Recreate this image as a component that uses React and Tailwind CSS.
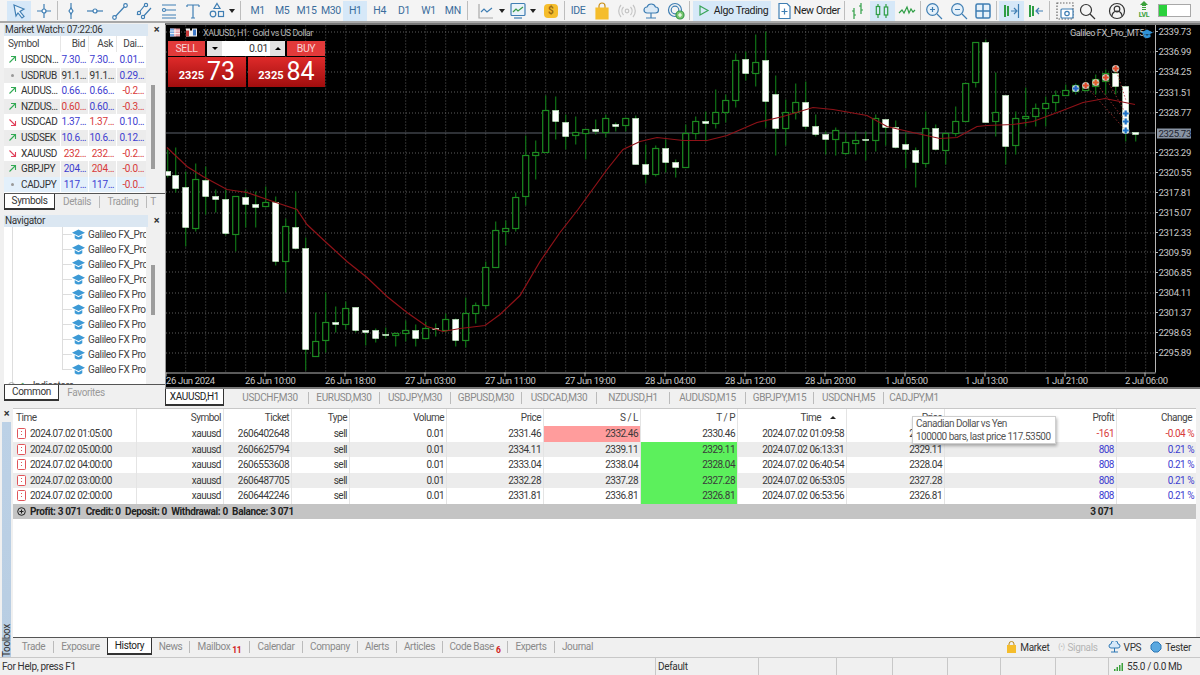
import React from "react";

const candles = [
[167.7,150,178,172,176,'w'],[175.7,148,193,176,189,'w'],[185.7,172,247,188,228,'w'],[195.7,164,232,180,229,'g'],[205.7,167,215,181,197,'w'],[215.7,190,213,197,200,'w'],[225.7,190,236,200,234,'w'],[235.7,197,252,197,235,'g'],[245.7,190,228,198,205,'w'],[255.7,192,228,205,208,'w'],[265.7,187,208,203,207,'g'],[275.7,197,266,203,262,'w'],[285.7,219,293,227,262,'g'],[295.7,192,250,228,249,'w'],[305.7,238,371,249,350,'w'],[315.7,313,357,342,357,'g'],[325.7,293,353,323,341,'g'],[335.7,307,333,323,325,'w'],[345.7,302,330,309,325,'g'],[355.7,308,333,308,331,'w'],[365.7,331,346,331,333,'w'],[375.7,329,343,331,339,'w'],[385.7,328,339,335,336,'w'],[395.7,333,347,334,336,'g'],[405.7,321,342,331,334,'g'],[415.7,325,347,331,339,'w'],[425.7,322,340,329,339,'g'],[435.7,324,337,329,330,'w'],[445.7,314,333,320,331,'g'],[455.7,319,347,320,341,'w'],[465.7,298,348,314,341,'g'],[475.7,303,324,306,314,'g'],[485.7,262,310,268,306,'g'],[495.7,222,268,231,268,'g'],[505.7,221,246,229,232,'g'],[515.7,193,232,198,229,'g'],[525.7,136,206,156,197,'g'],[535.7,141,180,153,156,'g'],[545.7,96,153,111,153,'g'],[555.7,97,140,111,122,'w'],[565.7,115,150,123,137,'w'],[575.7,117,145,133,136,'g'],[585.7,130,160,130,134,'g'],[595.7,120,135,130,132,'w'],[605.7,115,138,119,133,'g'],[615.7,123,132,125,127,'w'],[625.7,118,132,119,126,'g'],[635.7,116,165,119,165,'w'],[645.7,145,184,165,175,'w'],[655.7,146,177,149,175,'g'],[665.7,140,173,149,163,'w'],[675.7,160,178,163,168,'w'],[685.7,125,168,134,168,'g'],[695.7,117,140,122,134,'g'],[705.7,112,142,122,124,'w'],[715.7,90,129,113,124,'g'],[725.7,95,123,101,113,'g'],[735.7,54,108,61,101,'g'],[745.7,52,81,60,74,'w'],[755.7,35,87,63,74,'g'],[765.7,32,128,61,102,'w'],[775.7,76,156,95,129,'w'],[785.7,100,146,113,129,'g'],[795.7,84,120,103,113,'g'],[805.7,82,130,103,127,'w'],[815.7,115,137,127,135,'w'],[825.7,132,155,135,140,'w'],[835.7,128,156,131,140,'g'],[845.7,133,155,143,154,'g'],[855.7,132,155,141,144,'g'],[865.7,132,161,140,141,'w'],[875.7,115,152,119,141,'g'],[885.7,120,146,120,128,'w'],[895.7,121,149,128,148,'w'],[905.7,133,169,145,150,'w'],[915.7,148,188,151,163,'w'],[925.7,112,168,129,164,'g'],[935.7,125,151,129,150,'w'],[945.7,133,165,134,151,'g'],[955.7,107,137,122,134,'g'],[965.7,84,122,84,122,'g'],[975.7,43,88,43,83,'g'],[985.7,40,123,43,123,'w'],[995.7,73,137,113,122,'g'],[1005.7,96,165,96,147,'w'],[1015.7,112,155,119,146,'g'],[1025.7,88,127,117,119,'g'],[1035.7,104,127,109,117,'g'],[1045.7,97,127,104,109,'g'],[1055.7,91,112,96,103,'g'],[1065.7,85,96,91,96,'g'],[1075.7,84,95,86,92,'g'],[1085.7,82,92,86,91,'g'],[1095.7,75,95,80,87,'g'],[1105.7,70,95,74,82,'g'],[1115.7,67,95,74,87,'w'],[1125.7,87,142,87,133,'w'],[1135.7,133,142,133,135,'w']
];
const ma = "167,148 187,167 203,177 227,190 247,193 273,202 297,210 307,225 323,240 347,262 367,278 387,297 407,313 427,327 443,332 460,329 485,326 500,315 520,296 540,262 560,233 578,210 607,170 623,150 640,142 657,138 683,141 707,141 727,136 757,123 783,117 813,108 833,110 867,116 887,127 917,134 940,139 957,138 977,127 987,126 1013,125 1033,122 1060,112 1083,103 1105,99 1120,102 1135,105";
const prices = [[32,"2339.73"],[52,"2336.99"],[72,"2334.25"],[93,"2331.51"],[113,"2328.77"],[153,"2323.29"],[173,"2320.55"],[193,"2317.81"],[213,"2315.07"],[233,"2312.33"],[253,"2309.59"],[273,"2306.85"],[293,"2304.11"],[313,"2301.37"],[333,"2298.63"],[353,"2295.89"]];
const gridY = [32,52,72,92,113,153,173,192,213,233,252,272,293,313,333,353];
const gridX = Array.from({length:49},(_,i)=>185.7+i*20);
const times = [[166,"26 Jun 2024"],[245,"26 Jun 10:00"],[325,"26 Jun 18:00"],[405,"27 Jun 03:00"],[485,"27 Jun 11:00"],[565,"27 Jun 19:00"],[645,"28 Jun 04:00"],[725,"28 Jun 12:00"],[805,"28 Jun 20:00"],[885,"1 Jul 05:00"],[965,"1 Jul 13:00"],[1045,"1 Jul 21:00"],[1125,"2 Jul 06:00"]];

function Marker({x,y,c}){return <g><circle cx={x} cy={y} r="3.6" fill="#e8f0e8" opacity=".85"/><path d={`M${x-3} ${y}H${x+3}M${x} ${y-3}V${y+3}`} stroke={c} strokeWidth="2.2"/></g>;}

function Chart(){
 return <svg viewBox="165 24 1035 364" className="block w-full h-full">
  <rect x="165" y="24" width="1035" height="364" fill="#000"/>
  <g stroke="#666" strokeDasharray="1 2" strokeWidth=".9">
   {gridY.map(y=><line key={y} x1="166" x2="1155" y1={y+.5} y2={y+.5}/>)}
   {gridX.map(x=><line key={x} x1={x} x2={x} y1="26" y2="373"/>)}
  </g>
  <line x1="166" x2="1155" y1="133.5" y2="133.5" stroke="#737c88" strokeWidth=".8"/>
  <g strokeWidth="1.2">
  {candles.map(([x,h,l,t,b,k])=><g key={x}>
    <line x1={x} x2={x} y1={h} y2={l} stroke="#0f7316"/>
    {k==='g'?<rect x={x-3} y={t} width="6" height={b-t} fill="#000" stroke="#1c8a20"/>:<rect x={x-3} y={t} width="6" height={Math.max(b-t,1)} fill="#fff" stroke="#c9f5c9" strokeWidth=".6"/>}
  </g>)}
  </g>
  <polyline points={ma} fill="none" stroke="#8f1218" strokeWidth="1.2"/>
  <g stroke="#a33" strokeDasharray="1.5 2" strokeWidth=".8" fill="none">
   <path d="M1085.7 86L1125.7 131M1095.7 83L1125.7 122M1105.7 78L1125.7 114M1115.7 69L1125.7 100"/>
  </g>
  <Marker x={1075.7} y={89} c="#2266cc"/>
  <Marker x={1085.7} y={86} c="#e0492a"/>
  <Marker x={1095.7} y={83} c="#e0602a"/>
  <Marker x={1105.7} y={78} c="#e0492a"/>
  <Marker x={1115.7} y={69} c="#e0492a"/>
  <Marker x={1125.7} y={114} c="#1f74c8"/>
  <Marker x={1125.7} y={122} c="#1f74c8"/>
  <Marker x={1125.7} y={131} c="#1f74c8"/>
  <line x1="1155.5" x2="1155.5" y1="25" y2="373" stroke="#b5b5b5"/>
  <line x1="166" x2="1155.5" y1="373.5" y2="373.5" stroke="#b5b5b5"/>
  <line x1="165.5" x2="165.5" y1="25" y2="388" stroke="#9a9a9a"/>
  <line x1="166" x2="1200" y1="25" y2="25" stroke="#777"/>
  {prices.map(([y,t])=><g key={t}><line x1="1155" x2="1158" y1={y} y2={y} stroke="#bbb"/><text x="1158.500" y={y+3.5} fontSize="9.600" fill="#c9c9c9">{t}</text></g>)}
  <rect x="1157" y="129" width="34" height="10" fill="#8893a3"/>
  <text x="1158.500" y="137.500" fontSize="9.600" fill="#1d2430">2325.73</text>
  {times.map(([x,t],i)=><g key={t}><line x1={x+20-(i?0:20)} x2={x+20-(i?0:20)} y1="373" y2="377" stroke="#bbb"/><text x={x} y="384" fontSize="9.500" fill="#c9c9c9">{t}</text></g>)}
  <rect x="170" y="29" width="10" height="8" fill="#e9a0a8"/><rect x="170" y="29" width="4" height="8" fill="#7aa7df"/><path d="M170 31.500H180M170 34H180M175 29V37" stroke="#fff" strokeWidth=".8"/>
  <path d="M186 29h4v2h2v-2h5v8h-11z" fill="#eee"/><rect x="186" y="31" width="3" height="6" fill="#c83a3a"/><rect x="193" y="30" width="3" height="6" fill="#3c78c8"/>
  <text x="203" y="36" fontSize="9" letterSpacing="-0.5" fill="#b5b5b5" xmlSpace="preserve">XAUUSD, H1:  Gold vs US Dollar</text>
  <text x="1070" y="36" fontSize="9.200" letterSpacing="-0.45" fill="#c4c4c4">Galileo FX_Pro_MT5</text>
  <path d="M1141 33l6-3 6 3-6 3zM1143.500 35v2.500c2 1.500 5 1.500 7 0V35" fill="#2f93d8"/>
 </svg>;
}

function TradePanel(){
 return <div className="absolute left-[3px] top-[18px] w-[157px] h-[46px] flex flex-col gap-px text-white">
  <div className="flex h-[15px] items-stretch">
   <div className="w-[37px] bg-[#e23a3a] text-[10.500px] leading-[15px] text-center text-[#f6d5d5]">SELL</div>
   <div className="w-[82px] flex bg-white border-x-2 border-black text-[10.500px] text-[#333]">
     <div className="w-[15px] bg-[#e2e2e2] flex items-center justify-center"><div className="border-x-[3px] border-x-transparent border-t-[3px] border-t-black"/></div>
     <div className="flex-1 text-right leading-[15px] pr-[2px]">0.01</div>
     <div className="w-[15px] bg-[#e2e2e2] flex items-center justify-center"><div className="border-x-[3px] border-x-transparent border-b-[3px] border-b-black"/></div>
   </div>
   <div className="w-[38px] bg-[#e23a3a] text-[10.500px] leading-[15px] text-center text-[#f6d5d5]">BUY</div>
  </div>
  <div className="flex gap-[2px] h-[30px]">
   <div className="w-[78px] bg-gradient-to-b from-[#df2a2a] to-[#a00d0d] flex items-end justify-center gap-[3px] pb-[1px]"><span className="text-[11px] font-bold mb-[2px] tracking-normal">2325</span><span className="text-[25px] leading-[28px] tracking-normal">73</span></div>
   <div className="w-[77px] bg-gradient-to-b from-[#df2a2a] to-[#a00d0d] flex items-end justify-center gap-[3px] pb-[1px]"><span className="text-[11px] font-bold mb-[2px] tracking-normal">2325</span><span className="text-[25px] leading-[28px] tracking-normal">84</span></div>
  </div>
 </div>;
}

const S = ({w=18,h=18,children,cn=""})=><svg width={w} height={h} viewBox="0 0 18 18" fill="none" stroke="#3f7eb3" strokeWidth="1.2" className={cn}>{children}</svg>;
const Caret = ()=><div className="border-x-[3px] border-x-transparent border-t-[4px] border-t-[#222]"/>;
const Sep = ()=><div className="w-px h-[19px] bg-[#bdbdbd] mx-[1px] shrink-0"/>;

function Tool({w="w-[24.400px]",hl,children}){
 return <div className={`${w} h-[20px] shrink-0 flex items-center justify-center ${hl?"bg-[#d6e8f8]":""}`}>{children}</div>;
}
const Tf = ({t,hl})=><Tool hl={hl}><span className="text-[10.500px] text-[#3b6d9c]">{t}</span></Tool>;

function Toolbar(){
 return <div className="h-[23px] flex items-center pl-[7px] bg-[#f4f4f4] border-b-2 border-b-[#a8a8a8] shrink-0">
  <Tool hl><S><path d="M4 3l10 4-4 2.500 4 5-2 1.500-4-5-2 3z" fill="#e9f3fb"/></S></Tool>
  <Tool><S><path d="M9 2v14M2 9h14"/><circle cx="9" cy="9" r="2" fill="#fff"/></S></Tool>
  <Sep/>
  <Tool><S><path d="M9 1v16"/><path d="M9 6l2 3-2 3-2-3z" fill="#fff"/></S></Tool>
  <Tool><S><path d="M1 9h16"/><circle cx="9" cy="9" r="2" fill="#fff"/></S></Tool>
  <Tool><S><path d="M3 16L15 3"/><circle cx="3.500" cy="15.500" r="1.800" fill="#fff"/><circle cx="14.500" cy="3.500" r="1.800" fill="#fff"/></S></Tool>
  <Tool><S><path d="M2 13L10 3M7 16l9-10"/><circle cx="4" cy="11" r="1.600" fill="#fff"/><circle cx="11" cy="3" r="1.600" fill="#fff"/><circle cx="8" cy="15" r="1.600" fill="#fff"/></S></Tool>
  <Tool><S><path d="M2 3h14M6 8h10M2 13h14M2 16h14"/><circle cx="4" cy="8" r="1.500" fill="#fff"/></S></Tool>
  <Tool><S><path d="M3 3h12M9 3v13M7 16h4M3 3v2M15 3v2"/></S></Tool>
  <Tool><S><path d="M9 1.500l3 5H6z"/><circle cx="5" cy="12" r="2.800"/><rect x="10.500" y="9.500" width="5" height="5"/></S></Tool>
  <div className="w-[5px] flex justify-center"><Caret/></div>
  <div className="w-[4px] shrink-0"/><Sep/><div className="w-[4px] shrink-0"/>
  {["M1","M5","M15","M30"].map(t=><Tf key={t} t={t}/>)}<Tf t="H1" hl/>{["H4","D1","W1","MN"].map(t=><Tf key={t} t={t}/>)}
  <div className="w-[1px] shrink-0"/><Sep/><div className="w-[5px] shrink-0"/>
  <Tool><S><path d="M2 2v14h14" stroke="#aaa"/><path d="M4 10l3-3 3 3 5-4"/></S></Tool>
  <div className="w-[7px] shrink-0 flex justify-center"><Caret/></div>
  <Tool><S><rect x="2" y="1.500" width="14" height="12" rx="1" fill="#eaf3fa"/><path d="M4 10l3-3 2 2 5-4" stroke="#3a9a4a"/><path d="M5 16h8"/></S></Tool>
  <div className="w-[7px] shrink-0 flex justify-center"><Caret/></div>
  <div className="w-[7px] shrink-0"/>
  <Tool w="w-[14px]"><div className="w-[14px] h-[14px] bg-[#f5bd2c] rounded-sm text-[10px] leading-[14px] text-center text-[#9a6a10] font-bold">$</div></Tool>
  <div className="w-[5px] shrink-0"/><Sep/>
  <Tool><span className="text-[10.500px] text-[#3b6d9c]">IDE</span></Tool>
  <Tool><S><path d="M6 6V4a3 3 0 016 0v2" stroke="#c98e14"/><path d="M3 6h12v11H3z" fill="#f5bd2c" stroke="#f5bd2c"/></S></Tool>
  <Tool><S><circle cx="9" cy="9" r="1.800" stroke="#c4c4c4"/><path d="M5.500 5a6 6 0 000 8M12.500 5a6 6 0 010 8M3 3a9 9 0 000 12M15 3a9 9 0 010 12" stroke="#c4c4c4"/></S></Tool>
  <Tool><S><path d="M5 11a3 3 0 010-6 4.500 4.500 0 018.500 0 3 3 0 010 6z" fill="#dceaf6"/><path d="M9 11v5M4 16h10"/></S></Tool>
  <Tool><S><circle cx="8" cy="8" r="6.500"/><circle cx="8" cy="8" r="3.800"/><circle cx="13" cy="13" r="4" fill="#7ac66f" stroke="#3a9a4a"/><path d="M13 11v4M11 13h4" stroke="#fff"/></S></Tool>
  <Sep/><div className="w-[2px] shrink-0"/>
  <div className="w-[78px] h-[20px] bg-[#d6e8f8] flex items-center gap-[4px] pl-[4px] shrink-0">
    <svg width="13" height="13" viewBox="0 0 13 13" fill="none" stroke="#3aa55a" strokeWidth="1.200"><path d="M3 2l8 4.500L3 11z"/></svg>
    <span className="text-[10.500px] text-[#222] whitespace-nowrap">Algo Trading</span>
  </div>
  <div className="w-[4px] shrink-0"/>
  <div className="flex items-center gap-[1px] w-[68px] shrink-0">
    <S><path d="M4 1.500h8l3 3v12H4z" fill="#fff"/><path d="M9.500 6.500v6M6.500 9.500h6"/></S>
    <span className="text-[10.500px] text-[#222] whitespace-nowrap">New Order</span>
  </div>
  <Sep/>
  <Tool><S><path d="M5 6v11M3 9h2M5 13h2M12 1v11M10 4h2M12 8h2" stroke="#2f9e45"/></S></Tool>
  <Tool hl><S><path d="M5 2v14M13 2v14" stroke="#2f9e45"/><rect x="3.300" y="4.500" width="3.400" height="8" fill="#d6e8f8" stroke="#2f9e45"/><rect x="11.300" y="5" width="3.400" height="8" fill="#d6e8f8" stroke="#2f9e45"/></S></Tool>
  <Tool><S><path d="M1 11l3-3 2 3 3-6 2 6 2-4 2 3 2-2" stroke="#2f9e45"/></S></Tool>
  <Sep/>
  <Tool><S><circle cx="7.500" cy="7.500" r="5.800" fill="#e6f1fa"/><path d="M12 12l5 5M5 7.500h5M7.500 5v5"/></S></Tool>
  <Tool><S><circle cx="7.500" cy="7.500" r="5.800" fill="#e6f1fa"/><path d="M12 12l5 5M5 7.500h5"/></S></Tool>
  <Tool><svg width="18" height="18" viewBox="0 0 18 18" fill="#e6f1fa" stroke="#3f7eb3" strokeWidth="1.500"><rect x="2" y="2" width="14" height="14" rx="1.500"/><path d="M9 2v14M2 9h14"/></svg></Tool>
  <Sep/><div className="w-[1px] shrink-0"/>
  <Tool hl><S><path d="M3 3v12M6 4v10" stroke="#2f9e45" strokeWidth="2"/><path d="M9 9h5M12 6l3 3-3 3M16.500 2v14"/></S></Tool>
  <Tool><S><path d="M3 3v12M6 4v10" stroke="#2f9e45" strokeWidth="2"/><path d="M16 9h-6M12 6L9 9l3 3"/></S></Tool>
  <Sep/><div className="w-[3px] shrink-0"/>
  <Tool w="w-[22px]"><S><path d="M1 1h16v16H1z" strokeDasharray="1.500 1.500" stroke="#666"/><rect x="5" y="7" width="12" height="9" rx="1" fill="#fff"/><circle cx="11" cy="11.500" r="2.200"/></S></Tool>
  <Tool w="w-[22px]"><S><circle cx="8" cy="8" r="5.500" stroke="#333"/><path d="M12 12l5 5" stroke="#333"/></S></Tool>
  <div className="w-[8px] shrink-0"/>
  <Tool w="w-[22px]"><S><circle cx="9" cy="9" r="7.500" stroke="#333"/><circle cx="9" cy="7" r="2.800" stroke="#333"/><path d="M4 14a5 5 0 0110 0" stroke="#333"/></S></Tool>
  <div className="w-[7px] shrink-0"/>
  <div className="w-[18px] h-[20px] flex flex-col items-center shrink-0">
    <svg width="10" height="10" viewBox="0 0 10 10" fill="#3ba13b"><path d="M5 0l4 4H7v1H3V4H1zM3 6h4v1H3zM3 8h4v1H3z"/></svg>
    <span className="text-[7px] leading-[8px] font-bold text-[#3ba13b]">LVL</span>
  </div>
  <div className="w-[5px] shrink-0"/>
  <div className="w-[33px] h-[13px] border border-[#a8a8a8] bg-white flex shrink-0"><div className="w-[8px] h-full bg-[#2bd13c]"/></div>
 </div>;
}

const B="text-[#3d3dd0]", R="text-[#d83a3a]", K="text-[#333]";
const mw=[
 ["up","USDCN…",["7.30…",B],["7.30…",B],["0.01…",B]],
 ["dot","USDRUB",["91.1…",K],["91.1…",K],["0.29…",B]],
 ["up","AUDUS…",["0.66…",B],["0.66…",B],["-0.2…",R]],
 ["up","NZDUS…",["0.60…",R],["0.60…",B],["-0.3…",R]],
 ["dn","USDCAD",["1.37…",B],["1.37…",R],["0.10…",B]],
 ["up","USDSEK",["10.6…",B],["10.6…",B],["0.12…",B]],
 ["dn","XAUUSD",["232…",R],["232…",R],["-0.2…",R]],
 ["up","GBPJPY",["204…",B],["204…",R],["-0.0…",R]],
 ["dot","CADJPY",["117…",B],["117…",B],["-0.0…",R]],
];
function Dir({d}){
 if(d==="dot") return <div className="w-[9px] shrink-0 flex justify-center"><div className="w-[3px] h-[3px] rounded-full bg-[#999]"/></div>;
 return d==="up"?<svg className="shrink-0" width="9" height="9" viewBox="0 0 9 9" fill="none" stroke="#33aa55" strokeWidth="1.100"><path d="M1.500 7.500L7.500 1.500M3 1.500h4.500V6"/></svg>:<svg className="shrink-0" width="9" height="9" viewBox="0 0 9 9" fill="none" stroke="#e0405a" strokeWidth="1.100"><path d="M1.500 1.500L7.500 7.500M3 7.500h4.500V3"/></svg>;
}
function PanelHead({title}){
 return <div className="flex h-[11px] items-center mt-px shrink-0"><div className="w-[144px] ml-[4px] h-[12px] bg-[#dbe7f2] text-[10px] leading-[12px] pl-px text-[#333] whitespace-nowrap">{title}</div><div className="flex-1 text-center text-[11px] font-bold text-[#333] leading-[11px]">×</div></div>;
}
function Scroll({cn}){return <div className={`absolute left-[151px] w-[4px] bg-[#9c9c9c] ${cn}`}/>;}
function MarketWatch(){
 return <div className="relative h-[170px] shrink-0 flex flex-col">
  <PanelHead title="Market Watch: 07:22:06"/>
  <div className="ml-[4px] mt-[1px] w-[142px] bg-white flex-1 overflow-hidden text-[10px]">
   <div className="grid grid-cols-[56px_28px_28px_30px] h-[16px] leading-[16px] text-[#444]">
    <div className="pl-[4px]">Symbol</div><div className="text-right pr-[3px] border-l border-[#e6e6e6]">Bid</div><div className="text-right pr-[3px] border-l border-[#e6e6e6]">Ask</div><div className="text-right pr-[3px] border-l border-[#e6e6e6]">Dai…</div>
   </div>
   {mw.map((r,i)=><div key={r[1]} className={`grid grid-cols-[56px_28px_28px_30px] h-[15.600px] leading-[15.600px] whitespace-nowrap ${i===8?"bg-[#e3f0fb]":i%2?"bg-[#ececec]":"bg-white"}`}>
     <div className="flex items-center gap-[4px] pl-[4px] text-[#333]"><Dir d={r[0]}/>{r[1]}</div>
     {[r[2],r[3],r[4]].map((c,j)=><div key={j} className={`text-right pr-[2px] border-l border-white ${c[1]}`}>{c[0]}</div>)}
   </div>)}
  </div>
  <Scroll cn="top-[62px] h-[84px]"/>
 </div>;
}
function SmallTabs({tabs}){
 return <div className="flex h-[16px] shrink-0 border-t border-t-[#555] ml-[4px] text-[10px] items-start">
  {tabs.map((t,i)=>i===0
   ?<div key={t[0]} className={`${t[1]} h-[16px] bg-white border border-t-0 border-[#333] border-b-2 text-center leading-[14px] text-[#333]`}>{t[0]}</div>
   :<div key={t[0]} className={`${t[1]} h-[12px] mt-[2px] leading-[12px] text-center text-[#9a9a9a] border-r border-[#bbb] last:border-r-0`}>{t[0]}</div>)}
 </div>;
}
function Navigator(){
 const rows=["Galileo FX_Prc","Galileo FX_Prc","Galileo FX_Prc","Galileo FX_Prc","Galileo FX Pro","Galileo FX Pro","Galileo FX Pro","Galileo FX Pro","Galileo FX Pro","Galileo FX Pro"];
 return <div className="relative flex-1 flex flex-col mt-[5px]">
  <PanelHead title="Navigator"/>
  <div className="ml-[4px] w-[142px] h-[157px] shrink-0 bg-white mt-[1px] overflow-hidden relative text-[10px] text-[#444]">
   <div className="absolute left-[8px] top-0 bottom-0 w-px bg-[#ddd]"/>
   <div className="absolute left-[58px] top-0 h-[143px] w-px bg-[#ddd]"/>
   <div className="flex flex-col pl-[58px]">
   {rows.map((r,i)=><div key={i} className="flex items-center h-[15px] whitespace-nowrap">
     <div className="w-[10px] h-px bg-[#ddd] shrink-0"/>
     <svg className="shrink-0" width="13" height="12" viewBox="0 0 12 11" fill="#3d9ad6"><path d="M6 .5l6 3-6 3-6-3z"/><path d="M2.500 5.500v3c2 1.500 5 1.500 7 0v-3L6 7.500z" /></svg>
     <span className="ml-[3px]">{r}</span>
   </div>)}
   <div className="absolute left-[4px] top-[151px] flex items-center gap-[5px] text-[#444] whitespace-nowrap"><span className="w-[7px] h-[7px] border border-[#aaa] rounded-full"/><span className="text-[#3a9a4a] text-[9px]">∿</span><span>Indicators</span></div>
   </div>
  </div>
  <Scroll cn="top-[51px] h-[50px]"/>
  <SmallTabs tabs={[["Common","w-[55px]"],["Favorites","w-[54px]"]]}/>
 </div>;
}

const chartTabs=[["USDCHF,M30","w-[77px]"],["EURUSD,M30","w-[71px]"],["USDJPY,M30","w-[71px]"],["GBPUSD,M30","w-[71px]"],["USDCAD,M30","w-[75px]"],["NZDUSD,H1","w-[73px]"],["AUDUSD,M15","w-[76px]"],["GBPJPY,M15","w-[68px]"],["USDCNH,M5","w-[70px]"],["CADJPY,M1","w-[60px]"]];

const rows=[
 ["2024.07.02 01:05:00","2606402648","2331.46","2332.46","2330.46","2024.07.02 01:09:58","2330.46","-161","-0.04 %"],
 ["2024.07.02 05:00:00","2606625794","2334.11","2339.11","2329.11","2024.07.02 06:13:31","2329.11","808","0.21 %"],
 ["2024.07.02 04:00:00","2606553608","2333.04","2338.04","2328.04","2024.07.02 06:40:54","2328.04","808","0.21 %"],
 ["2024.07.02 03:00:00","2606487705","2332.28","2337.28","2327.28","2024.07.02 06:53:05","2327.28","808","0.21 %"],
 ["2024.07.02 02:00:00","2606442246","2331.81","2336.81","2326.81","2024.07.02 06:53:56","2326.81","808","0.21 %"],
];
const cols="grid grid-cols-[124px_87px_68px_58px_97px_97px_97px_97px_109px_98px_172px_79px]";
const cell="text-right pr-[2px] border-r border-[#e4e4e4] whitespace-nowrap overflow-hidden";
function Table(){
 const heads=["Symbol","Ticket","Type","Volume","Price","S / L","T / P"];
 return <div className="flex-1 bg-white relative text-[10px] tracking-[-0.5px] text-[#3a3a3a] border-t border-[#c8c8c8] mt-[2px]">
  <div className={`${cols} h-[17px] leading-[17px] text-[#444]`}>
   <div className="pl-[3px] border-r border-[#e4e4e4]">Time</div>
   {heads.map(h=><div key={h} className={cell}>{h}</div>)}
   <div className={`${cell} flex items-center justify-end gap-[9px] pr-[10px]`}>Time<div className="border-x-[3px] border-x-transparent border-b-[3px] border-b-[#222]"/></div>
   <div className={cell}>Price</div><div className={cell}>Profit</div><div className="text-right pr-[4px]">Change</div>
  </div>
  {rows.map((r,i)=>{const neg=i===0;const c=neg?"text-[#d83a3a]":"text-[#3d3dd0]";return <div key={r[1]} className={`${cols} h-[15.500px] leading-[15.500px] ${i%2?"bg-[#ececec]":"bg-white"}`}>
    <div className="flex items-center gap-[4px] pl-[4px] border-r border-[#e4e4e4] whitespace-nowrap">
      <svg className="shrink-0" width="9" height="11" viewBox="0 0 9 11" fill="#fff" stroke="#e0555a"><rect x=".5" y=".5" width="8" height="10" rx="1"/><path d="M4.500 3v1M4.500 6v1" stroke="#e0555a"/></svg>{r[0]}</div>
    <div className={cell}>xauusd</div><div className={cell}>{r[1]}</div><div className={cell}>sell</div><div className={cell}>0.01</div><div className={cell}>{r[2]}</div>
    <div className={`${cell} ${neg?"bg-[#ff9c9c]":""}`}>{r[3]}</div>
    <div className={`${cell} ${neg?"":"bg-[#5cf05c]"}`}>{r[4]}</div>
    <div className={cell}>{r[5]}</div><div className={cell}>{r[6]}</div>
    <div className={`${cell} ${c}`}>{r[7]}</div><div className={`text-right pr-[2px] ${c}`}>{r[8]}</div>
  </div>})}
  <div className="h-[15px] bg-[#c4c4c4] leading-[15px] flex font-bold text-[#222] tracking-[-0.35px]">
   <div className="w-[1104px] flex items-center justify-between pl-[4px] pr-[3px] whitespace-nowrap">
     <div className="flex items-center gap-[4px]"><svg width="9" height="9" viewBox="0 0 9 9" fill="none" stroke="#222"><circle cx="4.500" cy="4.500" r="3.800"/><path d="M2.500 4.500h4M4.500 2.500v4"/></svg><span>Profit: 3 071&nbsp; Credit: 0&nbsp; Deposit: 0&nbsp; Withdrawal: 0&nbsp; Balance: 3 071</span></div>
     <span>3 071</span>
   </div>
  </div>
  <div className="absolute left-[899px] top-[7px] w-[144px] h-[28px] bg-white border border-[#cfcfcf] shadow-[1px_2px_3px_rgba(0,0,0,.3)] px-[3px] text-[10px] leading-[13px] text-[#555] whitespace-nowrap">
    <div>Canadian Dollar vs Yen</div><div>100000 bars, last price 117.53500</div>
  </div>
 </div>;
}

const bottomTabs=[["Trade","w-[40px]"],["Exposure","w-[53px]"],["History","w-[45px]"],["News","w-[38px]"],["Mailbox","w-[60px]"],["Calendar","w-[53px]"],["Company","w-[55px]"],["Alerts","w-[39px]"],["Articles","w-[46px]"],["Code Base","w-[65px]"],["Experts","w-[47px]"],["Journal","w-[45px]"]];
function BottomTabs(){
 return <div className="h-[20px] flex items-start border-t border-t-[#555] bg-[#f0f0f0] text-[10px] shrink-0">
  <div className="w-[1px] shrink-0"/>
  {bottomTabs.map(([t,w])=>{
   const sup=t==="Mailbox"?"11":t==="Code Base"?"6":null;
   if(t==="History") return <div key={t} className={`${w} shrink-0 h-[17px] bg-white border border-t-0 border-b-2 border-[#333] text-center leading-[15px] text-[#222]`}>{t}</div>;
   return <div key={t} className={`${w} shrink-0 h-[12px] mt-[3px] leading-[12px] text-center text-[#8a8a8a] whitespace-nowrap ${t==="Exposure"||t==="Journal"?"":"border-r border-[#bbb]"}`}>{t}{sup&&<span className="relative top-[3px] text-[8.500px] text-[#d02020] font-bold ml-[2px]">{sup}</span>}</div>;
  })}
  <div className="flex-1"/>
  <div className="flex items-center h-[18px] gap-[3px] text-[#333] pr-[9px]">
   <svg width="11" height="12" viewBox="0 0 11 12"><path d="M3 4V3a2.500 2.500 0 015 0v1" stroke="#b98a20" fill="none"/><path d="M1 4h9v8H1z" fill="#f5bd2c"/></svg><span>Market</span>
   <span className="text-[#b9b9b9] ml-[6px] text-[7px]">(•)</span><span className="text-[#b5b5b5]">Signals</span>
   <svg className="ml-[7px]" width="13" height="12" viewBox="0 0 13 12" fill="#d6e8f8" stroke="#2f78b5"><path d="M3 7a2 2 0 010-4 3.500 3.500 0 017 0 2 2 0 010 4zM6.500 7v4M3 11h7"/></svg><span>VPS</span>
   <svg className="ml-[6px]" width="12" height="12" viewBox="0 0 12 12" fill="#5aa8e0" stroke="#2f78b5"><path d="M4 1h4l3 3v4l-3 3H4L1 8V4z"/></svg><span>Tester</span>
  </div>
 </div>;
}

function Status(){
 const seps=[["w-[656px]","For Help, press F1"],["w-[103px]","Default"],["w-[78px]",""],["w-[56px]",""],["w-[55px]",""],["w-[53px]",""],["w-[55px]",""],["w-[53px]",""]];
 return <div className="h-[18px] flex bg-[#f0f0f0] border-t border-[#c8c8c8] text-[10px] text-[#333] leading-[17px] shrink-0">
  {seps.map(([w,t],i)=><div key={i} className={`${w} shrink-0 pl-[2px] border-r border-[#c8c8c8] whitespace-nowrap`}>{t}</div>)}
  <div className="flex items-center gap-[4px] pl-[5px] whitespace-nowrap">
   <svg width="9" height="8" viewBox="0 0 9 8" fill="#3ba13b"><rect x="0" y="6" width="1.500" height="2"/><rect x="2.500" y="4" width="1.500" height="4"/><rect x="5" y="2" width="1.500" height="6"/><rect x="7.500" y="0" width="1.500" height="8"/></svg>
   55.0 / 0.0 Mb</div>
 </div>;
}

export default function App(){
 return <div className="w-[1200px] h-[675px] bg-[#f0f0f0] overflow-hidden flex flex-col tracking-[-0.35px]" style={{fontFamily:"Roboto,'Noto Sans',sans-serif"}}>
  <Toolbar/>
  <div className="flex h-[383px] shrink-0">
   <div className="w-[165px] shrink-0 flex flex-col">
    <MarketWatch/>
    <SmallTabs tabs={[["Symbols","w-[51px]"],["Details","w-[45px]"],["Trading","w-[47px]"],["T","w-[12px]"]]}/>
    <Navigator/>
   </div>
   <div className="flex-1 flex flex-col min-w-0">
    <div className="relative flex-1 min-h-0">
      <Chart/>
      <TradePanel/>
    </div>
    <div className="h-[18px] flex items-start bg-[#f0f0f0] text-[10px] text-[#8a8a8a] shrink-0 border-t border-t-[#777]">
      <div className="w-[59px] h-[17px] bg-white border border-t-0 border-[#333] border-b-2 text-center leading-[15px] text-[#222] shrink-0">XAUUSD,H1</div>
      <div className="w-[8px] shrink-0"/>
      {chartTabs.map(([t,w],i)=><div key={t} className={`${w} h-[12px] mt-[3px] leading-[12px] text-center whitespace-nowrap shrink-0 ${i===chartTabs.length-1?"":"border-r border-[#bbb]"}`}>{t}</div>)}
    </div>
   </div>
  </div>
  <div className="flex h-[251px] shrink-0">
   <div className="w-[13px] shrink-0 flex flex-col items-center">
    <div className="h-[16px] text-[11px] font-bold text-[#333] leading-[16px]">×</div>
    <div className="w-[9px] flex-1 bg-gradient-to-b from-[#bcd1e6] to-[#b8cde2] relative flex items-end justify-center">
      <span className="[writing-mode:vertical-rl] rotate-180 text-[10px] leading-[9px] text-[#333] pb-[1px]">Toolbox</span>
    </div>
   </div>
   <div className="flex-1 flex flex-col min-w-0 pr-[4px]">
    <Table/>
    <div className="-mr-[4px]"><BottomTabs/></div>
   </div>
  </div>
  <Status/>
 </div>;
}
